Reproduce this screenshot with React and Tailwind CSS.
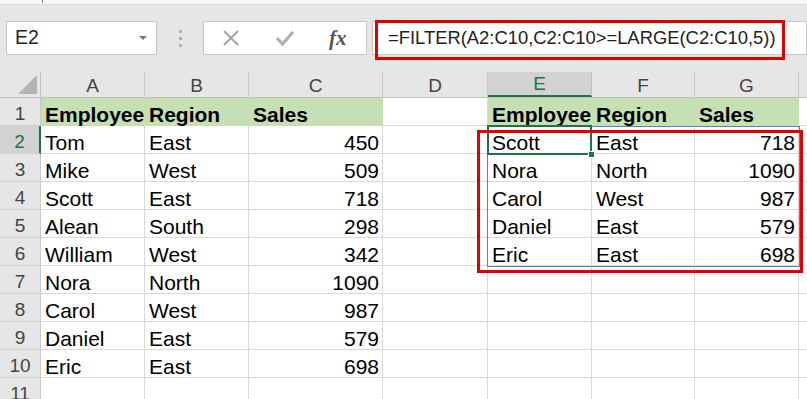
import React from "react";

const COLS = [
  { key: "A", w: "w-[104px]" },
  { key: "B", w: "w-[104px]" },
  { key: "C", w: "w-[134px]" },
  { key: "D", w: "w-[105px]" },
  { key: "E", w: "w-[104px]" },
  { key: "F", w: "w-[103px]" },
  { key: "G", w: "w-[104px]" },
];

const left = [
  ["Tom", "East", 450],
  ["Mike", "West", 509],
  ["Scott", "East", 718],
  ["Alean", "South", 298],
  ["William", "West", 342],
  ["Nora", "North", 1090],
  ["Carol", "West", 987],
  ["Daniel", "East", 579],
  ["Eric", "East", 698],
];

const spill = [
  ["Scott", "East", 718],
  ["Nora", "North", 1090],
  ["Carol", "West", 987],
  ["Daniel", "East", 579],
  ["Eric", "East", 698],
];

function Cell({ w, children, right, header }) {
  return (
    <div
      className={`${w} h-[28px] shrink-0 flex items-end border-r border-b ${
        header ? "bg-[#c6e0b4] border-[#c6e0b4] font-bold" : "border-[#d9d9d9]"
      } ${right ? "justify-end pr-[3px]" : "pl-[4px]"}`}
    >
      <span className="leading-[21px] whitespace-nowrap">{children}</span>
    </div>
  );
}

function RowHead({ n, active }) {
  return (
    <div
      className={`w-[41px] h-[28px] shrink-0 flex items-end justify-center border-b border-[#d0d0d0] text-[19px] ${
        active
          ? "bg-[#d2d2d2] text-[#217346] border-r-2 border-r-[#217346]"
          : "bg-[#e6e6e6] text-[#444] border-r border-r-[#c8c8c8]"
      }`}
    >
      <span className="leading-[22px]">{n}</span>
    </div>
  );
}

function Row({ n, cells, header }) {
  return (
    <div className="flex h-[28px]">
      <RowHead n={n} active={n === 2} />
      {COLS.map((c, i) => {
        const v = cells[i];
        return (
          <Cell key={c.key} w={c.w} right={typeof v === "number"} header={header && v !== ""}>
            {v}
          </Cell>
        );
      })}
      <div className="flex-1 h-[28px] border-b border-[#d9d9d9]" />
    </div>
  );
}

export default function App() {
  const rows = [["Employee", "Region", "Sales", "", "Employee", "Region", "Sales"]];
  for (let i = 0; i < 9; i++) {
    const a = left[i];
    const e = spill[i] || ["", "", ""];
    rows.push([a[0], a[1], a[2], "", e[0], e[1], e[2]]);
  }
  rows.push(["", "", "", "", "", "", ""]);

  return (
    <div className="relative w-[807px] h-[399px] overflow-hidden bg-white font-['Liberation_Sans',sans-serif] text-[21px] text-black">
      {/* top strip */}
      <div className="h-[5px] bg-[#f6f6f6] border-b border-[#dadada] flex">
        <div className="ml-[42px] w-px h-[3px] bg-[#888]" />
      </div>

      {/* formula bar */}
      <div className="h-[67px] bg-[#e6e6e6] flex items-start pt-[16px] pl-[6px]">
        <div className="w-[151px] h-[34px] bg-white border border-[#c6c6c6] flex items-center justify-between pl-[8px] pr-[9px]">
          <span className="text-[19.5px] text-[#222]">E2</span>
          <div className="w-0 h-0 border-l-[4px] border-r-[4px] border-t-[4px] border-l-transparent border-r-transparent border-t-[#777]" />
        </div>
        <div className="w-[46px] h-[34px] flex flex-col items-center justify-center gap-[4px]">
          <div className="w-[3px] h-[3px] bg-[#b0b0b0]" />
          <div className="w-[3px] h-[3px] bg-[#b0b0b0]" />
          <div className="w-[3px] h-[3px] bg-[#b0b0b0]" />
        </div>
        <div className="w-[164px] h-[34px] bg-white border border-[#c6c6c6] flex items-center pl-[18px]">
          <svg width="18" height="18" viewBox="0 0 18 18">
            <path d="M2 2L16 16M16 2L2 16" stroke="#a6a6a6" strokeWidth="2" fill="none" />
          </svg>
          <svg width="20" height="18" viewBox="0 0 20 18" className="ml-[35px]">
            <path d="M2 9L7.5 15L18 3" stroke="#b0b0b0" strokeWidth="3.2" fill="none" />
          </svg>
          <span className="ml-[34px] font-['Liberation_Serif',serif] italic font-bold text-[21px] text-[#555] leading-none">
            fx
          </span>
        </div>
        <div className="ml-[5px] flex-1 h-[34px] bg-white border border-[#c6c6c6] flex items-center pl-[15px]">
          <span className="text-[18.4px] text-[#222] whitespace-nowrap">
            =FILTER(A2:C10,C2:C10&gt;=LARGE(C2:C10,5))
          </span>
        </div>
      </div>

      {/* column headers */}
      <div className="flex h-[26px] bg-[#e6e6e6] border-b border-[#c0c0c0]">
        <div className="w-[41px] shrink-0 border-r border-[#c0c0c0] flex items-end justify-end pr-[3px] pb-[3px]">
          <svg width="19" height="19" viewBox="0 0 19 19">
            <path d="M19 0L19 19L0 19Z" fill="#b4b4b4" />
          </svg>
        </div>
        {COLS.map((c) => (
          <div
            key={c.key}
            className={`${c.w} shrink-0 flex items-end justify-center text-[19px] ${
              c.key === "E"
                ? "bg-[#d2d2d2] text-[#217346] border-b-2 border-b-[#217346] border-r border-r-[#c0c0c0]"
                : "text-[#444] border-r border-[#c8c8c8]"
            }`}
          >
            <span className="leading-[22px]">{c.key}</span>
          </div>
        ))}
        <div className="flex-1" />
      </div>

      {/* grid */}
      {rows.map((r, i) => (
        <Row key={i} n={i + 1} cells={r} header={i === 0} />
      ))}

      {/* selection and spill range */}
      <div className="absolute left-[487px] top-[126px] w-[313px] h-[141px] border border-[#5b7ec6]" />
      <div className="absolute left-[487px] top-[125px] w-[105px] h-[30px] border-2 border-[#217346]" />
      <div className="absolute left-[588px] top-[151px] w-[7px] h-[7px] bg-[#217346] border border-white" />

      {/* red annotations */}
      <div className="absolute left-[375px] top-[20px] w-[410px] h-[40px] border-[3px] border-[#e00000]" />
      <div className="absolute left-[477px] top-[130px] w-[326px] h-[143px] border-[3px] border-[#e00000]" />
    </div>
  );
}
